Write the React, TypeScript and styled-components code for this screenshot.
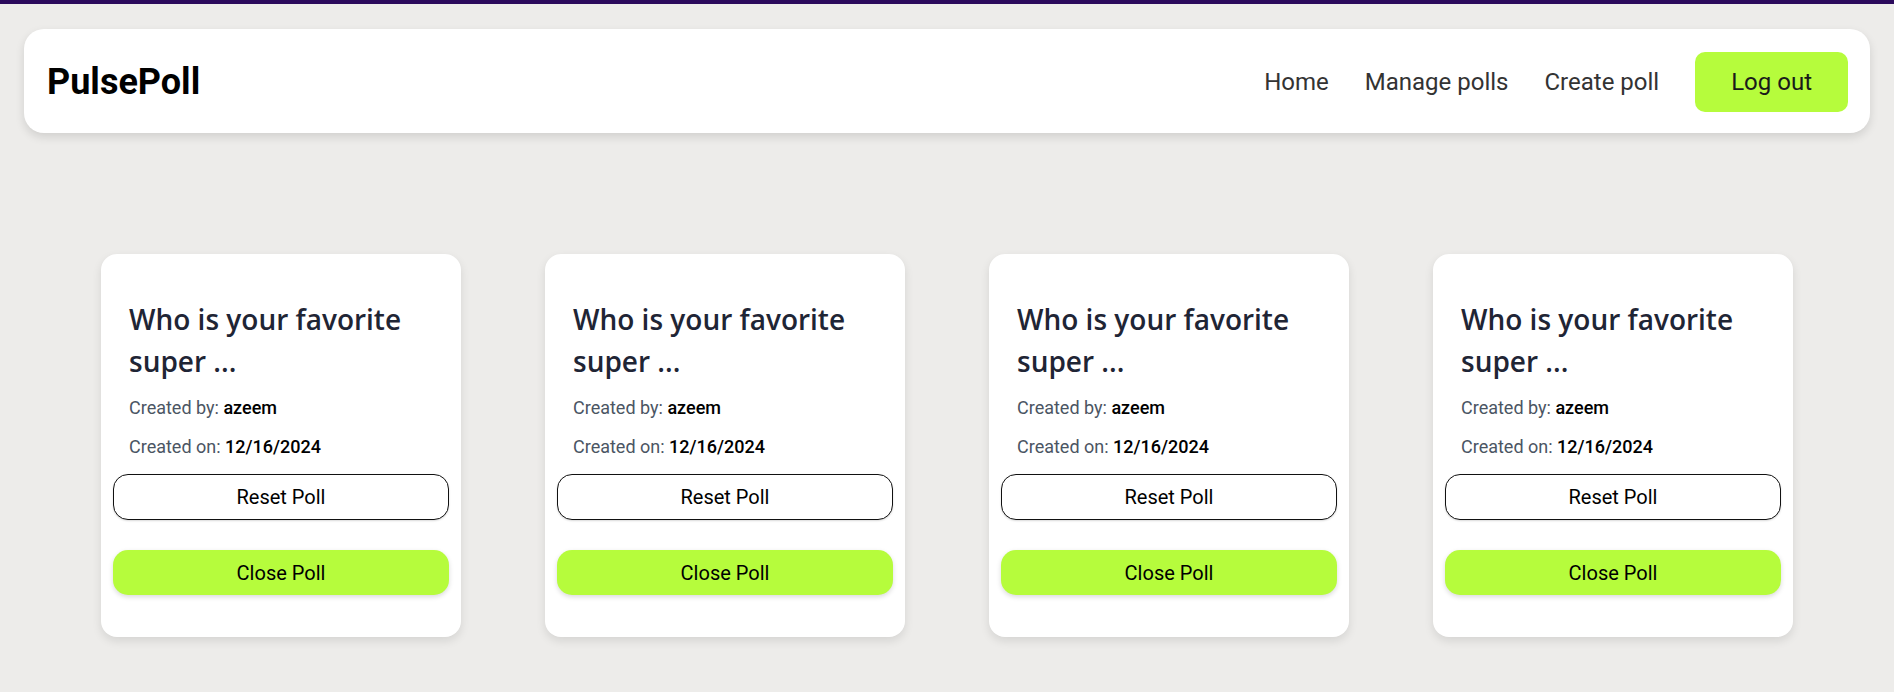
import React from "react";
import styled, { createGlobalStyle } from "styled-components";

const GlobalStyle = createGlobalStyle`
  html, body {
    margin: 0;
    padding: 0;
    background: #edecea;
    font-family: Roboto, "Liberation Sans", sans-serif;
  }
  body {
    border-top: 4px solid #2b0a5c;
    min-height: 688px;
  }
  * { box-sizing: border-box; }
`;

const Page = styled.div`
  padding: 25px 24px 40px;
`;

const NavBar = styled.header`
  height: 104px;
  background: #ffffff;
  border-radius: 20px;
  box-shadow: 0 4px 10px rgba(0, 0, 0, 0.12);
  display: flex;
  align-items: center;
  justify-content: space-between;
  padding: 2px 22px 0 23px;
`;

const Logo = styled.div`
  font-family: Roboto, "Liberation Sans", sans-serif;
  font-weight: 700;
  font-size: 36px;
  color: #000;
`;

const NavLinks = styled.nav`
  display: flex;
  align-items: center;
  gap: 36px;
`;

const NavLink = styled.a`
  font-size: 24px;
  color: #333;
  text-decoration: none;
  cursor: pointer;
`;

const LogoutButton = styled.button`
  font-family: Roboto, "Liberation Sans", sans-serif;
  font-size: 24px;
  line-height: 36px;
  padding: 12px 36px;
  border: none;
  border-radius: 10px;
  background: #b6fc3c;
  color: #1a1a1a;
  cursor: pointer;
`;

const CardRow = styled.main`
  display: flex;
  justify-content: center;
  gap: 84px;
  margin-top: 121px;
`;

const Card = styled.section`
  width: 360px;
  background: #fff;
  border-radius: 16px;
  box-shadow: 0 4px 10px rgba(0, 0, 0, 0.1);
  padding: 44px 12px 42px;
  display: flex;
  flex-direction: column;
`;

const Info = styled.div`
  padding: 0 16px;
`;

const Title = styled.h2`
  margin: 0 0 15px;
  font-family: "Open Sans", "Noto Sans", sans-serif;
  font-weight: 600;
  font-size: 28px;
  line-height: 42px;
  color: #1f2535;
`;

const Meta = styled.p`
  margin: 0 0 18px;
  font-size: 18px;
  color: #4b5563;

  &:last-child {
    margin-bottom: 17px;
  }
`;

const MetaValue = styled.span`
  font-weight: 500;
  color: #000;
`;

const PollButton = styled.button<{ $primary?: boolean }>`
  font-family: Roboto, "Liberation Sans", sans-serif;
  font-size: 20px;
  color: #000;
  width: 100%;
  height: ${(p) => (p.$primary ? "45px" : "46px")};
  border-radius: 15px;
  cursor: pointer;
  border: ${(p) => (p.$primary ? "none" : "1px solid #111")};
  background: ${(p) => (p.$primary ? "#b6fc3c" : "#fff")};
  box-shadow: ${(p) =>
    p.$primary ? "0 2px 5px rgba(0,0,0,0.15)" : "0 1px 2px rgba(0,0,0,0.15)"};
  margin-top: ${(p) => (p.$primary ? "30px" : "0")};
`;

const polls = [1, 2, 3, 4].map((id) => ({
  id,
  title: "Who is your favorite super ...",
  author: "azeem",
  date: "12/16/2024",
}));

export default function App() {
  return (
    <>
      <GlobalStyle />
      <Page>
        <NavBar>
          <Logo>PulsePoll</Logo>
          <NavLinks>
            <NavLink>Home</NavLink>
            <NavLink>Manage polls</NavLink>
            <NavLink>Create poll</NavLink>
            <LogoutButton>Log out</LogoutButton>
          </NavLinks>
        </NavBar>
        <CardRow>
          {polls.map((p) => (
            <Card key={p.id}>
              <Info>
                <Title>{p.title}</Title>
                <Meta>
                  Created by: <MetaValue>{p.author}</MetaValue>
                </Meta>
                <Meta>
                  Created on: <MetaValue>{p.date}</MetaValue>
                </Meta>
              </Info>
              <PollButton>Reset Poll</PollButton>
              <PollButton $primary>Close Poll</PollButton>
            </Card>
          ))}
        </CardRow>
      </Page>
    </>
  );
}
